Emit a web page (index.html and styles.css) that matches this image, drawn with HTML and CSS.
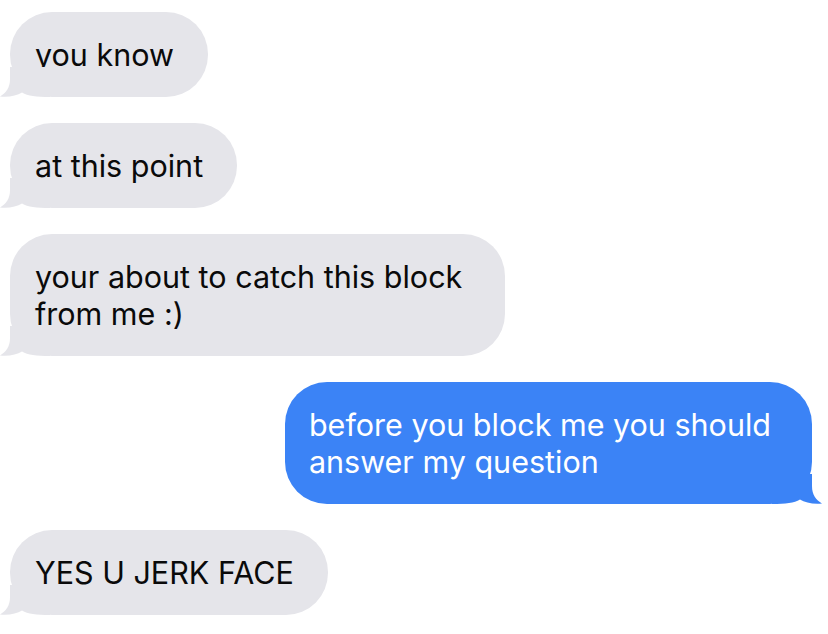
FILE: index.html
```html
<!DOCTYPE html>
<html>
<head>
<meta charset="utf-8">
<link rel="stylesheet" href="styles.css">
</head>
<body>
<div class="thread">
  <div class="bubble in">you know<svg class="tail" viewBox="0 0 50 30" width="50" height="30"><path d="M10 0 L10 12 C10 21 6 26 0 29.5 C9 30.5 17 28.5 22 25.5 C28 29 36 30 50 30 L50 0 Z"/></svg></div>
  <div class="bubble in">at this point<svg class="tail" viewBox="0 0 50 30" width="50" height="30"><path d="M10 0 L10 12 C10 21 6 26 0 29.5 C9 30.5 17 28.5 22 25.5 C28 29 36 30 50 30 L50 0 Z"/></svg></div>
  <div class="bubble in wide">your about to catch this block<br>from me :)<svg class="tail" viewBox="0 0 50 30" width="50" height="30"><path d="M10 0 L10 12 C10 21 6 26 0 29.5 C9 30.5 17 28.5 22 25.5 C28 29 36 30 50 30 L50 0 Z"/></svg></div>
  <div class="bubble out">before you block me you should<br>answer my question<svg class="tail" viewBox="0 0 50 30" width="50" height="30"><path d="M40 0 L40 12 C40 21 44 26 50 29.5 C41 30.5 33 28.5 28 25.5 C22 29 14 30 0 30 L0 0 Z"/></svg></div>
  <div class="bubble in">YES U JERK FACE<svg class="tail" viewBox="0 0 50 30" width="50" height="30"><path d="M10 0 L10 12 C10 21 6 26 0 29.5 C9 30.5 17 28.5 22 25.5 C28 29 36 30 50 30 L50 0 Z"/></svg></div>
</div>
</body>
</html>
```
FILE: styles.css
```css
html, body {
  margin: 0;
  padding: 0;
  background: #ffffff;
}
.thread {
  display: flex;
  flex-direction: column;
  gap: 26px;
  padding: 12px 16px 0 10px;
  font-family: "Inter", "Liberation Sans", Arial, sans-serif;
  font-size: 30.5px;
  line-height: 37px;
}
.bubble {
  position: relative;
  align-self: flex-start;
  padding: 24px 34px 24px 25px;
  border-radius: 42px;
  background: #e5e5ea;
  color: #0a0a0a;
}
.bubble.wide {
  padding-right: 43px;
}
.bubble .tail {
  position: absolute;
  bottom: 0;
  left: -10px;
  fill: #e5e5ea;
}
.bubble.out {
  align-self: flex-end;
  background: #3b83f6;
  color: #ffffff;
  padding: 24px 41px 24px 24px;
}
.bubble.out .tail {
  left: auto;
  right: -10px;
  fill: #3b83f6;
}
```
